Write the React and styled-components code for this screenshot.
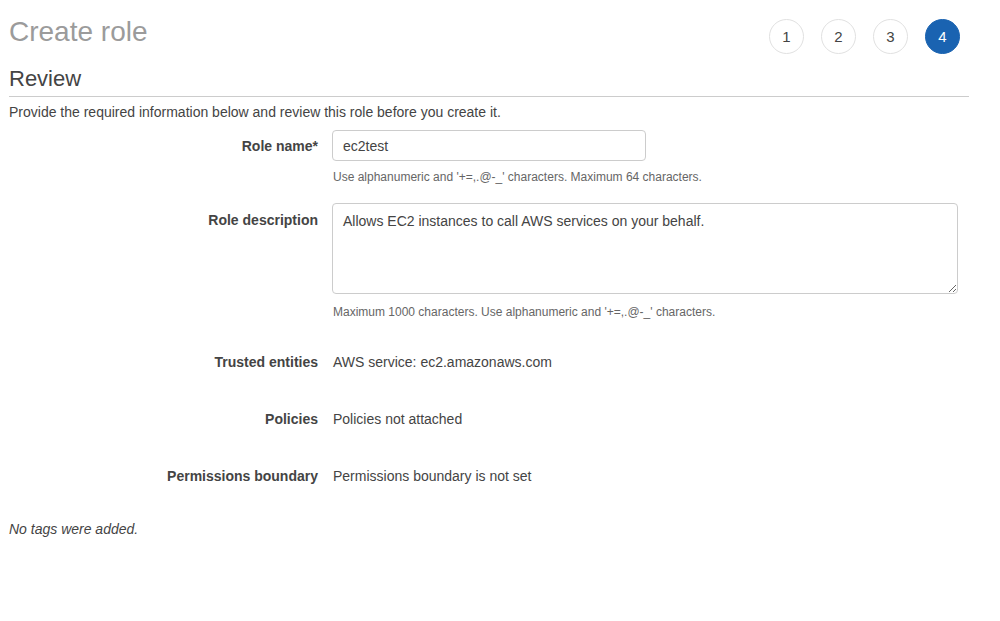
import React from "react";
import styled, { createGlobalStyle } from "styled-components";

const GlobalStyle = createGlobalStyle`
  body {
    margin: 0;
    background: #fff;
    font-family: "Liberation Sans", Arial, sans-serif;
    color: #444;
  }
`;

const steps = [1, 2, 3, 4];
const current = 4;

const details = [
  { label: "Trusted entities", value: "AWS service: ec2.amazonaws.com" },
  { label: "Policies", value: "Policies not attached" },
  { label: "Permissions boundary", value: "Permissions boundary is not set" },
];

const App = () => {
  return (
    <>
      <GlobalStyle />
      <Page>
        <Header>
          <Title>Create role</Title>
          <Steps>
            {steps.map((n) => (
              <Step key={n} active={n === current}>
                {n}
              </Step>
            ))}
          </Steps>
        </Header>
        <SectionTitle>Review</SectionTitle>
        <Intro>
          Provide the required information below and review this role before
          you create it.
        </Intro>

        <Row>
          <Label offset={6}>Role name*</Label>
          <Field>
            <Input defaultValue="ec2test" />
            <Hint>
              Use alphanumeric and '+=,.@-_' characters. Maximum 64 characters.
            </Hint>
          </Field>
        </Row>

        <Row gap={17}>
          <Label offset={7}>Role description</Label>
          <Field>
            <TextArea defaultValue="Allows EC2 instances to call AWS services on your behalf." />
            <Hint space={10}>
              Maximum 1000 characters. Use alphanumeric and '+=,.@-_'
              characters.
            </Hint>
          </Field>
        </Row>

        {details.map((d, i) => (
          <Row key={d.label} gap={i === 0 ? 31 : 37}>
            <Label>{d.label}</Label>
            <Value>{d.value}</Value>
          </Row>
        ))}

        <Note>No tags were added.</Note>
      </Page>
    </>
  );
};

const Page = styled.div`
  width: 960px;
  padding: 0 0 40px 9px;
  font-size: 14px;
`;

const Header = styled.div`
  display: flex;
  justify-content: space-between;
  align-items: flex-start;
  padding-right: 9px;
`;

const Title = styled.h1`
  margin: 16px 0 0;
  font-size: 28px;
  line-height: 31px;
  font-weight: 400;
  color: #9b9b9b;
`;

const Steps = styled.div`
  display: flex;
  gap: 17px;
  margin-top: 19px;
`;

const Step = styled.div`
  width: 35px;
  height: 35px;
  box-sizing: border-box;
  border-radius: 50%;
  border: 1px solid ${(p) => (p.active ? "#1a63b1" : "#e1e1e1")};
  background: ${(p) => (p.active ? "#1a63b1" : "#fff")};
  color: ${(p) => (p.active ? "#fff" : "#444")};
  display: flex;
  align-items: center;
  justify-content: center;
  font-size: 15px;
`;

const SectionTitle = styled.h2`
  margin: 12px 0 0;
  padding-bottom: 4px;
  font-size: 22px;
  line-height: 26px;
  font-weight: 400;
  color: #444;
  border-bottom: 1px solid #cccccc;
`;

const Intro = styled.p`
  margin: 5px 0 0;
  line-height: 20px;
  color: #444;
`;

const Row = styled.div`
  display: grid;
  grid-template-columns: 309px 1fr;
  column-gap: 14px;
  margin-top: ${(p) => p.gap ?? 8}px;
`;

const Label = styled.div`
  text-align: right;
  font-weight: 700;
  line-height: 20px;
  padding-top: ${(p) => p.offset ?? 0}px;
  color: #444;
`;

const Field = styled.div`
  display: flex;
  flex-direction: column;
  align-items: flex-start;
`;

const Input = styled.input`
  width: 314px;
  height: 31px;
  box-sizing: border-box;
  padding: 0 10px;
  border: 1px solid #cccccc;
  border-radius: 4px;
  font-family: inherit;
  font-size: 14px;
  color: #444;
  outline: none;
`;

const TextArea = styled.textarea`
  width: 626px;
  height: 91px;
  box-sizing: border-box;
  padding: 7px 10px;
  border: 1px solid #cccccc;
  border-radius: 4px;
  font-family: inherit;
  font-size: 14px;
  line-height: 20px;
  color: #444;
  outline: none;
  resize: both;
`;

const Hint = styled.div`
  margin-top: ${(p) => p.space ?? 8}px;
  font-size: 12px;
  line-height: 17px;
  color: #666;
  padding-left: 1px;
`;

const Value = styled.div`
  line-height: 20px;
  color: #444;
  padding-left: 1px;
`;

const Note = styled.p`
  margin: 33px 0 0;
  line-height: 20px;
  font-style: italic;
  color: #444;
`;

export default App;
